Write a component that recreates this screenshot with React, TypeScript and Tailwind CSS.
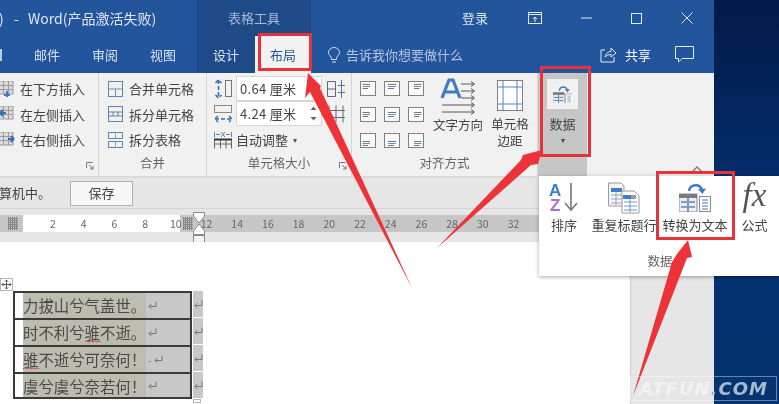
import React from 'react';

const Svg: React.FC<{ w: number; h: number; children: React.ReactNode }> = ({ w, h, children }) => (
  <svg width={w} height={h} viewBox={`0 0 ${w} ${h}`} fill="none" className="block shrink-0">
    {children}
  </svg>
);

const GridIcon: React.FC<{ kind: 'bottom' | 'left' | 'right' }> = ({ kind }) => (
  <Svg w={16} h={16}>
    <rect x="0" y="0" width="14" height="13" fill="#dcdcdc" stroke="#9a9a9a" />
    <path d="M0 4.5H14M0 8.5H14M4.5 0V13M9.5 0V13" stroke="#9a9a9a" />
    {kind === 'bottom' && <path d="M5 14H11M8 10V16" stroke="#3d7cc0" strokeWidth="2" />}
    {kind === 'left' && <path d="M1 7H7M1 7L4 4M1 7L4 10" stroke="#2f6fb5" strokeWidth="2" />}
    {kind === 'right' && <path d="M9 7H15M15 7L12 4M15 7L12 10" stroke="#2f6fb5" strokeWidth="2" />}
  </Svg>
);

const MergeIcon: React.FC<{ kind: 0 | 1 | 2 }> = ({ kind }) => (
  <Svg w={15} h={16}>
    {kind === 0 && (
      <>
        <rect x="0.5" y="0.5" width="14" height="15" stroke="#5f83ad" />
        <path d="M0.5 8H14.5M7.5 8V15.5" stroke="#6c8db3" />
      </>
    )}
    {kind === 1 && (
      <>
        <rect x="0.5" y="0.5" width="14" height="15" stroke="#5f83ad" />
        <path d="M0.5 6H14.5M0.5 10H14.5" stroke="#5f83ad" />
        <path d="M5 6V10M10 6V10" stroke="#5f83ad" />
      </>
    )}
    {kind === 2 && (
      <>
        <path d="M0.5 0.5H14.5V6.5H0.5ZM0.5 9.5H14.5V15.5H0.5Z" stroke="#5f83ad" />
        <path d="M7.5 0.5V6.5M7.5 9.5V15.5" stroke="#8aa4c4" />
      </>
    )}
  </Svg>
);

const AlignIcon: React.FC<{ row: number; col: number }> = ({ row, col }) => {
  const y = row === 0 ? 3 : row === 1 ? 5 : 8;
  const x1 = col === 2 ? 6 : col === 1 ? 4 : 2.5;
  const x2 = col === 0 ? 10 : col === 1 ? 12 : 13.5;
  return (
    <Svg w={16} h={15}>
      <rect x="0.5" y="0.5" width="15" height="14" fill="#fafafa" stroke="#808080" />
      <path d={`M${x1} ${y + 0.5}H${x2}`} stroke="#777" />
      <path d={`M${x1} ${y + 2.5}H${x2}`} stroke="#5b93cc" />
      <path d={`M${x1} ${y + 4.5}H${x2 - 2}`} stroke="#777" />
    </Svg>
  );
};

const TextDirIcon = () => (
  <Svg w={36} h={40}>
    <path d="M2 20L9 2H13L20 20M5.5 14H16.5" stroke="#3d7cc0" strokeWidth="3.2" />
    <path d="M21 6H34M21 13H34M21 20H34M2 27H34M2 34H34" stroke="#555" />
    <path d="M31 3.5L34.5 6L31 8.5M31 10.5L34.5 13L31 15.5M31 17.5L34.5 20L31 22.5M31 24.5L34.5 27L31 29.5M31 31.5L34.5 34L31 36.5" stroke="#555" />
  </Svg>
);

const MarginIcon = () => (
  <Svg w={26} h={31}>
    <rect x="0.5" y="0.5" width="25" height="30" fill="#fff" stroke="#808080" />
    <path d="M0.5 7H25.5M0.5 24H25.5M6 0.5V30.5M20 0.5V30.5" stroke="#4f86c2" />
  </Svg>
);

const RowHeightIcon = () => (
  <Svg w={19} h={20}>
    <path d="M4.5 1V19M1.5 4L4.5 1L7.5 4M1.5 16L4.5 19L7.5 16" stroke="#2f6fb5" strokeWidth="1.6" strokeDasharray="4 2" />
    <rect x="11.5" y="1.5" width="6" height="16" stroke="#777" />
  </Svg>
);

const ColWidthIcon = () => (
  <Svg w={19} h={20}>
    <rect x="0.5" y="1.5" width="17" height="7" stroke="#888" />
    <path d="M1 15H18M4 12L1 15L4 18M15 12L18 15L15 18" stroke="#2f6fb5" strokeWidth="1.5" strokeDasharray="4 2" />
  </Svg>
);

const AutoFitIcon = () => (
  <Svg w={18} h={18}>
    <path d="M0.5 1V6M17.5 1V6M2 3.5H6M12 3.5H16M7 1L11 6M11 1L7 6" stroke="#5f83ad" />
    <path d="M0 8.5H18" stroke="#333" strokeWidth="2" />
    <path d="M0.5 9V17.5M6.5 9V17.5M12 9V17.5M17.5 9V17.5M0 13H18" stroke="#666" />
  </Svg>
);

const DistributeIcon: React.FC<{ v?: boolean }> = ({ v }) => (
  <Svg w={18} h={18}>
    {v ? (
      <path d="M2 0.5V17.5M9 0.5V17.5M16 0.5V17.5M0 5.5H18M0 12.5H18" stroke="#667" />
    ) : (
      <>
        <path d="M0.5 1.5H8.5V16.5H0.5ZM0.5 9H8.5" stroke="#667" />
        <path d="M11 5.5H18M11 12.5H18" stroke="#667" />
        <path d="M14.5 0V18" stroke="#3d7cc0" />
      </>
    )}
  </Svg>
);

const ConvertIcon: React.FC<{ big?: boolean }> = ({ big }) => {
  const s = big ? 1 : 0.62;
  return (
    <svg width={32 * s} height={30 * s} viewBox="0 0 32 30" fill="none" className="block shrink-0">
      <path d="M10 9C11 2 21 1 23 8" stroke="#3d7cc0" strokeWidth="2.4" />
      <path d="M19 7L23.5 12L27 6.5Z" fill="#3d7cc0" />
      <rect x="0" y="12" width="18" height="18" fill="#e9eef5" stroke="#8b8b8b" />
      <rect x="0" y="12" width="18" height="4" fill="#7d7d7d" />
      <path d="M2 20H8M10 20H16M2 25H8M10 25H16M9 16V30" stroke="#5d86b6" strokeWidth="1.6" />
      <rect x="20.5" y="14.5" width="11" height="15" fill="#fff" stroke="#8b8b8b" />
      <path d="M23 18H29M23 21H29M23 24H29M23 27H29" stroke="#3d7cc0" />
    </svg>
  );
};

const SortIcon = () => (
  <svg width="30" height="38" viewBox="0 0 30 38" fill="none" className="block shrink-0 -mb-[8px]">
    <text x="0" y="14" fontSize="17" fontWeight="700" fill="#3f7fc4" fontFamily="Liberation Sans, sans-serif">A</text>
    <text x="1" y="29" fontSize="17" fontWeight="700" fill="#a472c8" fontFamily="Liberation Sans, sans-serif">Z</text>
    <path d="M22 1V27M16 21L22 28L28 21" stroke="#777" strokeWidth="1.6" />
  </svg>
);

const RepeatIcon = () => (
  <Svg w={32} h={32}>
    <path d="M0.5 1H13L16 4V24H0.5Z" fill="#f4f4f4" stroke="#9a9a9a" />
    <rect x="3" y="6" width="11" height="4" fill="#3f7fc4" />
    <path d="M3 13H14M3 17H14M3 21H14M8 10V23" stroke="#9aa9bb" />
    <path d="M14 9H26L31 14V31H14Z" fill="#fff" stroke="#9a9a9a" />
    <rect x="15" y="13" width="8" height="4" fill="#3f7fc4" />
    <rect x="23" y="13" width="5" height="4" fill="#9a9a9a" />
    <path d="M16 20H29M16 24H29M16 28H29M22 17V30" stroke="#6d9ac9" />
  </Svg>
);

const ReturnMark = () => (
  <svg width="9" height="9" viewBox="0 0 9 9" fill="none" className="block">
    <path d="M8 0.5V5.5H1M3.5 3L1 5.5L3.5 8" stroke="#777" />
  </svg>
);

const Squiggle = () => (
  <svg width="16" height="3" viewBox="0 0 16 3" fill="none" className="absolute left-0 bottom-[1px]">
    <path d="M0 2L2 0.7L4 2L6 0.7L8 2L10 0.7L12 2L14 0.7L16 2" stroke="#d23a3a" />
  </svg>
);

const Hatch = () => (
  <svg width="10" height="13" viewBox="0 0 10 13" className="block">
    <path d="M0.5 0V13M2.5 0V13M4.5 0V13M6.5 0V13M8.5 0V13M0 1.5H10M0 3.5H10M0 5.5H10M0 7.5H10M0 9.5H10M0 11.5H10" stroke="#888" strokeWidth="1" />
  </svg>
);

const RowInsert: React.FC<{ label: string; kind: 'bottom' | 'left' | 'right' }> = ({ label, kind }) => (
  <div className="flex items-center h-[25.5px]">
    <div className="w-[20px] overflow-hidden flex justify-end pr-[5px]">
      <GridIcon kind={kind} />
    </div>
    <span>{label}</span>
  </div>
);

const MergeRow: React.FC<{ label: string; kind: 0 | 1 | 2 }> = ({ label, kind }) => (
  <div className="flex items-center gap-[6px] h-[25.5px]">
    <MergeIcon kind={kind} />
    <span>{label}</span>
  </div>
);

const Group: React.FC<{ w: string; label?: string; launcher?: boolean; children: React.ReactNode }> = ({ w, label, launcher, children }) => (
  <div className={`${w} relative h-full flex flex-col border-r border-[#d4d4d4] shrink-0`}>
    <div className="flex-1 min-h-0">{children}</div>
    <div className="h-[26px] pt-[1px] flex items-center justify-center text-[12.5px] text-[#666]">{label}</div>
    {launcher && (
      <svg width="8" height="8" viewBox="0 0 8 8" fill="none" className="absolute right-[4px] bottom-[6px]">
        <path d="M0.5 6V0.5H6.5M3 3L7 7M7 4V7H4" stroke="#777" />
      </svg>
    )}
  </div>
);

const Spin: React.FC<{ value: string; arrows?: boolean }> = ({ value, arrows }) => (
  <div className="w-[86px] h-[25px] bg-white border border-[#d6d6d6] flex items-center pl-[3px] text-[13px] tracking-[0.3px] relative">
    {value}
    {arrows && (
      <svg width="7" height="15" viewBox="0 0 7 15" className="absolute right-[4px] top-[4px]">
        <path d="M0.5 4L3.5 0.5L6.5 4ZM0.5 11L3.5 14.5L6.5 11Z" fill="#666" />
      </svg>
    )}
  </div>
);

const TableRow: React.FC<{ text: React.ReactNode; space?: boolean; last?: boolean }> = ({ text, space, last }) => (
  <div className="flex h-[27px]">
    <div className={`w-[179px] border-l-2 border-r-2 border-t-2 border-[#3a3a3a] ${last ? 'border-b-2 h-[27px]' : ''} bg-[#c8c8c8] shrink-0 relative flex`}>
      <div className="w-[8px] bg-white shrink-0" />
      <div className="w-[123px] bg-[#bdbcb0] shrink-0 text-[15.4px] leading-[24px] text-[#4a4a4a] whitespace-nowrap">{text}</div>
      <div className="flex items-center pl-[2px] text-[#777] text-[10px]">
        {space && <span className="pr-[3px]">-</span>}
        <ReturnMark />
      </div>
    </div>
    <div className="w-[10px] bg-[#c8c8c8] ml-[1px] mb-[1px] flex items-center justify-center">
      <ReturnMark />
    </div>
  </div>
);

const rulerNumbers = [2, 4, 6, 8, 10, 12, 14, 16, 18, 20, 22, 24, 26, 28, 30, 32];

export default function App() {
  return (
    <div
      className="relative w-[779px] h-[404px] overflow-hidden flex bg-white text-[#444] text-[13px] blur-[0.3px]"
      style={{ fontFamily: '"Noto Sans CJK SC", "Noto Sans", sans-serif' }}
    >
      {/* Word window */}
      <div className="w-[714px] h-full flex flex-col shrink-0">
        {/* Title bar */}
        <div className="h-[36px] bg-[#22559c] flex text-white shrink-0">
          <div className="w-[197px] flex items-center text-[14px] text-[#dfe7f2] whitespace-nowrap">
            <span className="-ml-[1px] w-[15px]">)</span>
            <span className="w-[14px]">-</span>
            <span>Word(产品激活失败)</span>
          </div>
          <div className="w-[114px] bg-[#1e4a88] flex items-center justify-center text-[13px] text-[#a7bbd6]">表格工具</div>
          <div className="flex-1 flex items-center relative text-[#dfe7f2]">
            <span className="ml-[151px] text-[13px]">登录</span>
            <svg width="14" height="12" viewBox="0 0 14 12" fill="none" className="ml-[40px]">
              <rect x="0.5" y="0.5" width="13" height="11" stroke="#e4ebf4" />
              <path d="M0.5 2.5H13.5M7 10V5M5 7L7 5L9 7" stroke="#e4ebf4" />
            </svg>
            <svg width="11" height="2" viewBox="0 0 11 2" className="ml-[39px]">
              <path d="M0 1H11" stroke="#e4ebf4" />
            </svg>
            <svg width="11" height="11" viewBox="0 0 11 11" fill="none" className="ml-[39px]">
              <rect x="0.5" y="0.5" width="10" height="10" stroke="#e4ebf4" />
            </svg>
            <svg width="12" height="12" viewBox="0 0 12 12" fill="none" className="ml-[39px]">
              <path d="M0.5 0.5L11.5 11.5M11.5 0.5L0.5 11.5" stroke="#e4ebf4" />
            </svg>
          </div>
        </div>

        {/* Tabs */}
        <div className="h-[37px] bg-[#22559c] flex items-stretch text-[#d7e1ee] text-[13px] shrink-0">
          <div className="w-[197px] flex items-center relative">
            <span className="absolute left-[34px]">邮件</span>
            <span className="absolute left-[92px]">审阅</span>
            <span className="absolute left-[150px]">视图</span>
            <span className="absolute left-0 w-[2px] h-[12px] bg-[#b9c9de]" />
          </div>
          <div className="w-[58px] bg-[#1e4a88] flex items-center justify-center text-[#dfe7f2]">设计</div>
          <div className="w-[56px] bg-[#f1f1f1] flex items-center justify-center text-[#2b579a]">布局</div>
          <div className="flex-1 flex items-center pl-[17px] relative">
            <svg width="12" height="16" viewBox="0 0 12 16" fill="none">
              <path d="M3.5 10.5C1 8 .5 6.5.5 5.5A5.5 5 0 0 1 11.5 5.5C11.5 6.5 11 8 8.5 10.5V12.5H3.5ZM4 15H8" stroke="#d7e1ee" />
            </svg>
            <span className="ml-[6px] text-[13px] text-[#b4c5dc]">告诉我你想要做什么</span>
            <svg width="17" height="17" viewBox="0 0 17 17" fill="none" className="ml-[137px]">
              <path d="M5 4H1V16H14V11M5 11C6 7 9 5.5 11 5.5V2L16 7L11 11V8.5C8.5 8.5 6.5 9.5 5 11Z" stroke="#e4ebf4" />
            </svg>
            <span className="ml-[8px] text-white">共享</span>
            <svg width="19" height="17" viewBox="0 0 19 17" fill="none" className="ml-[24px]">
              <path d="M0.5 0.5H18.5V12.5H7L3.5 16V12.5H0.5Z" stroke="#e4ebf4" />
            </svg>
          </div>
        </div>

        {/* Ribbon */}
        <div className="h-[105px] bg-[#f1f1f1] flex border-b-2 border-[#dadada] shrink-0 relative">
          <Group w="w-[99px]" launcher>
            <div className="pt-[3px]">
              <RowInsert label="在下方插入" kind="bottom" />
              <RowInsert label="在左侧插入" kind="left" />
              <RowInsert label="在右侧插入" kind="right" />
            </div>
          </Group>
          <Group w="w-[108px]" label="合并">
            <div className="pt-[3px] pl-[9px]">
              <MergeRow label="合并单元格" kind={0} />
              <MergeRow label="拆分单元格" kind={1} />
              <MergeRow label="拆分表格" kind={2} />
            </div>
          </Group>
          <Group w="w-[145px]" label="单元格大小" launcher>
            <div className="pl-[7px] pt-[3px] flex flex-col">
              <div className="flex items-center gap-[3px]">
                <RowHeightIcon />
                <Spin value="0.64 厘米" />
                <div className="ml-[2px]"><DistributeIcon /></div>
              </div>
              <div className="flex items-center gap-[3px]">
                <ColWidthIcon />
                <Spin value="4.24 厘米" arrows />
                <div className="ml-[2px]"><DistributeIcon v /></div>
              </div>
              <div className="flex items-center gap-[3px] mt-[4px]">
                <AutoFitIcon />
                <span className="ml-[1px]">自动调整</span>
                <span className="text-[8px] ml-[2px] text-[#555]">▾</span>
              </div>
            </div>
          </Group>
          <Group w="w-[186px]" label="对齐方式">
            <div className="flex pl-[8px] pt-[8px]">
              <div className="grid grid-cols-3 gap-x-[8px] gap-y-[10px] w-[64px] shrink-0">
                {[0, 1, 2].map((r) =>
                  [0, 1, 2].map((c) => <AlignIcon key={`${r}-${c}`} row={r} col={c} />)
                )}
              </div>
              <div className="w-[62px] ml-[3px] -mt-[3px] flex flex-col items-center shrink-0">
                <TextDirIcon />
                <span className="-mt-[2px] text-[12.5px] whitespace-nowrap leading-[18px]">文字方向</span>
              </div>
              <div className="w-[40px] ml-[1px] -mt-[1px] flex flex-col items-center shrink-0">
                <MarginIcon />
                <span className="mt-[4px] text-[12.5px] leading-[17px] text-center">单元格<br />边距</span>
              </div>
            </div>
          </Group>
          <div className="w-[49px] h-full bg-[#c6c6c6] flex flex-col items-center shrink-0">
            <div className="mt-[6px] w-[31px] h-[30px] bg-[#f1f1f1] flex items-center justify-center">
              <ConvertIcon />
            </div>
            <span className="mt-[5px] text-[13px]">数据</span>
            <span className="text-[8px] leading-[10px] mt-[1px]">▾</span>
          </div>
          <div className="flex-1 flex justify-end items-end pr-[11px] pb-[3px]">
            <svg width="12" height="7" viewBox="0 0 12 7" fill="none">
              <path d="M1 6L6 1L11 6" stroke="#777" strokeWidth="1.4" />
            </svg>
          </div>
        </div>

        {/* Message bar */}
        <div className="h-[31px] bg-[#e6e6e6] border-b border-[#d4d4d4] flex items-center shrink-0">
          <span className="-ml-[1px] w-[71px]">算机中。</span>
          <div className="w-[63px] h-[25px] bg-[#f7f7f7] border border-[#b0b0b0] flex items-center justify-center">保存</div>
        </div>

        {/* Ruler */}
        <div className="h-[33px] bg-[#e6e6e6] pt-[6px] shrink-0">
          <div className="relative h-[17px] bg-[#c6c6c6] flex items-center text-[10.5px] text-[#666]">
            <div className="pl-[8px] w-[23px]"><Hatch /></div>
            <div className="w-[157px] h-full bg-white" />
            <div className="pl-[3px]"><Hatch /></div>
            {rulerNumbers.map((n, i) => (
              <span key={n} className="absolute w-[20px] text-center" style={{ left: 43 + i * 30.7 }}>{n}</span>
            ))}
            <svg width="12" height="31" viewBox="0 0 12 31" fill="none" className="absolute left-[193px] -top-[3px]">
              <path d="M0.5 0.5H11.5V4L6 11L0.5 4ZM6 12L11.5 19V22.5H0.5V19Z" fill="#fff" stroke="#8a8a8a" />
              <rect x="0.5" y="23.5" width="11" height="7" fill="#f2f2f2" stroke="#8a8a8a" />
            </svg>
          </div>
        </div>

        {/* Document */}
        <div className="flex-1 flex min-h-0">
          <div className="w-[630px] bg-white relative pt-[49px] pl-[13px] overflow-hidden">
            <svg width="13" height="13" viewBox="0 0 13 13" fill="none" className="absolute left-0 top-[36px]">
              <rect x="0.5" y="0.5" width="12" height="12" fill="#fff" stroke="#b5b5b5" />
              <path d="M6.5 2V11M2 6.5H11M5 3.5L6.5 2L8 3.5M5 9.5L6.5 11L8 9.5M3.5 5L2 6.5L3.5 8M9.5 5L11 6.5L9.5 8" stroke="#555" />
            </svg>
            <TableRow text="力拔山兮气盖世。" />
            <TableRow
              text={
                <>
                  时不利兮
                  <span className="relative inline-block">
                    骓
                    <Squiggle />
                  </span>
                  不逝。
                </>
              }
            />
            <TableRow
              space
              text={
                <>
                  <span className="relative inline-block">
                    骓
                    <Squiggle />
                  </span>
                  不逝兮可奈何！
                </>
              }
            />
            <TableRow text="虞兮虞兮奈若何！" last />
            <div className="ml-[180px] w-[8px] h-[4px] border border-[#b5b5b5] bg-white" />
          </div>
          <div className="flex-1 bg-[#e6e6e6] border-l border-[#cfcfcf]" />
        </div>
      </div>

      {/* Desktop behind the window */}
      <div className="flex-1 bg-gradient-to-b from-[#021a48] via-[#04306f] to-[#04336f]" />

      {/* Data dropdown panel */}
      <div className="absolute left-[539px] top-[176px] w-[240px] h-[100px] bg-white shadow-[0_1px_4px_rgba(0,0,0,0.35)] flex flex-col">
        <div className="flex h-[74px] text-[13px]">
          <div className="w-[50px] flex flex-col items-center pt-[6px]">
            <SortIcon />
            <span className="mt-[4px] leading-[18px]">排序</span>
          </div>
          <div className="w-[70px] flex flex-col items-center pt-[6px]">
            <RepeatIcon />
            <span className="mt-[2px] leading-[18px] whitespace-nowrap">重复标题行</span>
          </div>
          <div className="w-[72px] flex flex-col items-center pt-[6px]">
            <ConvertIcon big />
            <span className="mt-[4px] leading-[18px] whitespace-nowrap">转换为文本</span>
          </div>
          <div className="w-[47px] flex flex-col items-center pt-[4px]">
            <span
              className="h-[32px] text-[33px] leading-[30px] italic text-[#555]"
              style={{ fontFamily: '"Liberation Serif", serif' }}
            >
              fx
            </span>
            <span className="mt-[4px] leading-[18px]">公式</span>
          </div>
        </div>
        <div className="flex-1 flex items-center justify-center text-[12.5px] text-[#666] pb-[4px] pl-[2px]">数据</div>
      </div>

      {/* Annotations */}
      <div className="absolute left-[258px] top-[33px] w-[54px] h-[38px] border-[3px] border-[#e8323a]" />
      <div className="absolute left-[540px] top-[66px] w-[51px] h-[91px] border-[3px] border-[#e8323a]" />
      <div className="absolute left-[656px] top-[171px] w-[79px] h-[69px] border-[3px] border-[#e8323a]" />

      <svg width="779" height="404" viewBox="0 0 779 404" className="absolute left-0 top-0 pointer-events-none">
        <polygon points="308,73 321,86 320,88 412,288 310,92 305,98" fill="#ee3338" />
        <polygon points="542,150 538,164 531,165 437,248 521,160 523,155" fill="#ee3338" />
        <polygon points="688,240 692,257 687,258 633,396 672,262 677,254" fill="#ee3338" />
      </svg>

      {/* Watermark */}
      <div className="absolute left-[630px] top-[376px] w-[147px] h-[25px] border border-[#ffffff66] flex items-center justify-center">
        <span
          className="italic font-bold text-[18px] leading-none tracking-[1px] text-[#a8b8cf]"
          style={{ fontFamily: '"DejaVu Sans", sans-serif' }}
        >
          <span className="text-[#f2f2f2]">ATFUN</span>.COM
        </span>
      </div>
    </div>
  );
}
